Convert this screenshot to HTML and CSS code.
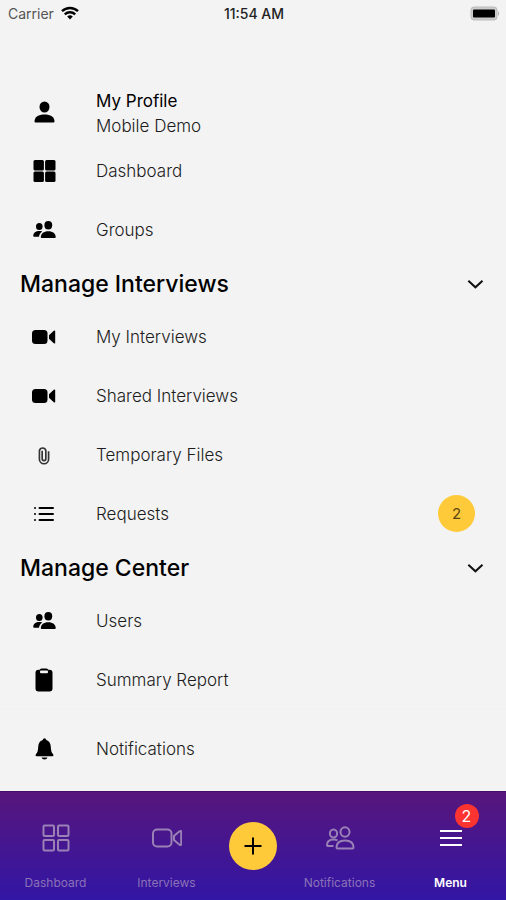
FILE: index.html
```html
<!DOCTYPE html>
<html lang="en">
<head>
<meta charset="utf-8">
<meta name="viewport" content="width=device-width, initial-scale=1">
<title>Menu</title>
<link rel="stylesheet" href="styles.css">
</head>
<body>
<svg class="sprite" aria-hidden="true">
  <symbol id="person" viewBox="0 0 24 24"><ellipse cx="12.500" cy="7" rx="5" ry="5.600"/><path d="M2.500 21.500c0-4.500 4-7 10-7s10 2.500 10 7q0 1-1 1h-18q-1 0-1-1z"/></symbol>
  <symbol id="grid" viewBox="0 0 24 24"><rect x="1.500" y="1" width="10.400" height="10.400" rx="1.500"/><rect x="13.100" y="1" width="10.400" height="10.400" rx="1.500"/><rect x="1.500" y="12.600" width="10.400" height="10.400" rx="1.500"/><rect x="13.100" y="12.600" width="10.400" height="10.400" rx="1.500"/></symbol>
  <symbol id="people" viewBox="0 0 24 24"><ellipse cx="16.300" cy="7.300" rx="3.900" ry="4.200"/><ellipse cx="7.300" cy="8.500" rx="3.300" ry="3.600"/><path d="M8.800 19.200c0-3.700 3-6 7.500-6s7.400 2.300 7.400 6q0 .8-.8.8H9.600q-.8 0-.8-.8z"/><path d="M10.300 13.600C8.400 14.900 7.200 16.700 7 18.800H2q-.7 0-.7-.8c0-3 2.500-4.900 6-4.900 1.200 0 2.100.1 3 .5z"/></symbol>
  <symbol id="video" viewBox="0 0 24 24"><rect x="0" y="5" width="15.500" height="14" rx="3.500"/><path d="M17 10.200l4.800-4.400q1.400-1 1.400.6v11.200q0 1.600-1.400.6L17 13.800z"/></symbol>
  <symbol id="clip" viewBox="0 0 24 24"><path d="M9.800 7v9.500a2.200 2.200 0 0 0 4.400 0V6.500a4 4 0 0 0-7.700 0V17a5.500 5.500 0 0 0 11 0V7.500"/></symbol>
  <symbol id="list" viewBox="0 0 24 24"><path d="M7.500 6H21M7.500 12H21M7.500 18H21"/><path class="dots" d="M3 6h.01M3 12h.01M3 18h.01"/></symbol>
  <symbol id="clipboard" viewBox="0 0 24 24"><path fill-rule="evenodd" d="M6.500 1.800h1.300Q8.500.6 9.800.6h4.400q1.300 0 2 1.200h1.300q3 0 3 3v15.600q0 3-3 3h-11q-3 0-3-3V4.800q0-3 3-3zM9 2.600q-1 0-1 1v.7q0 1 1 1h6q1 0 1-1v-.7q0-1-1-1z"/></symbol>
  <symbol id="bell" viewBox="0 0 24 24"><path d="M12.500 1.200q1.500 0 1.800 1.700c3 .8 4.300 3.600 4.500 7 .2 4 .8 5.400 2.200 7.200q1.200 2-.7 2.200H4.700q-1.900-.2-.7-2.200c1.400-1.800 2-3.200 2.200-7.200.2-3.400 1.500-6.200 4.500-7q.3-1.700 1.800-1.700zM9.500 20.500h6q-.6 2-3 2t-3-2z"/></symbol>
  <symbol id="chevron" viewBox="0 0 24 24"><path d="M4 8l8.500 8L21 8"/></symbol>
  <symbol id="grid-line" viewBox="0 0 30 30"><rect x="2.500" y="2.500" width="10.500" height="10.500" rx="1"/><rect x="17" y="2.500" width="10.500" height="10.500" rx="1"/><rect x="2.500" y="17" width="10.500" height="10.500" rx="1"/><rect x="17" y="17" width="10.500" height="10.500" rx="1"/></symbol>
  <symbol id="video-line" viewBox="0 0 30 30"><rect x="1" y="6.500" width="18.500" height="17" rx="4"/><path d="M22 13l5.500-4.700q1.700-1 1.700.7v12q0 1.700-1.700.7L22 17z"/></symbol>
  <symbol id="people-line" viewBox="0 0 30 30"><ellipse cx="20" cy="9" rx="4.500" ry="4.800"/><ellipse cx="8.500" cy="10.500" rx="3.600" ry="4"/><path d="M11.500 24.500c0-4.500 3-7 8.500-7s8.500 2.500 8.500 7q0 1-1 1h-15q-1 0-1-1zM12.500 17.400q-1.700-.8-4-.8c-4.300 0-6.500 2.300-6.500 5.600q0 .8.800.8H8.500"/></symbol>
</svg>

<div class="screen">
  <header class="status">
    <div class="carrier">Carrier
      <svg class="wifi" viewBox="0 0 18 14"><path d="M1 5.200a11.500 11.500 0 0 1 16 0M3.800 8.300a7.500 7.500 0 0 1 10.400 0"/><path class="solid" d="M6.200 10.600a4 4 0 0 1 5.600 0L9 13.600z"/></svg>
    </div>
    <time class="clock">11:54 AM</time>
    <svg class="battery" viewBox="0 0 30 15"><rect class="shell" x="1" y="1" width="26" height="13" rx="3"/><rect x="3" y="3.500" width="22" height="8" rx="1"/><path class="cap" d="M28 5q2 2.500 0 5z"/></svg>
  </header>

  <main class="menu">
    <a class="row profile" href="#profile"><svg class="icon"><use href="#person"/></svg><span class="lines"><span class="name">My Profile</span><span>Mobile Demo</span></span></a>
    <a class="row" href="#dashboard"><svg class="icon"><use href="#grid"/></svg><span>Dashboard</span></a>
    <a class="row" href="#groups"><svg class="icon"><use href="#people"/></svg><span>Groups</span></a>

    <h2 class="heading"><button class="toggle" type="button" aria-expanded="true">Manage Interviews<svg class="chevron"><use href="#chevron"/></svg></button></h2>
    <a class="row" href="#my-interviews"><svg class="icon"><use href="#video"/></svg><span>My Interviews</span></a>
    <a class="row" href="#shared"><svg class="icon"><use href="#video"/></svg><span>Shared Interviews</span></a>
    <a class="row" href="#files"><svg class="icon clip"><use href="#clip"/></svg><span>Temporary Files</span></a>
    <a class="row" href="#requests"><svg class="icon list"><use href="#list"/></svg><span>Requests</span><span class="count">2</span></a>

    <h2 class="heading"><button class="toggle" type="button" aria-expanded="true">Manage Center<svg class="chevron"><use href="#chevron"/></svg></button></h2>
    <a class="row" href="#users"><svg class="icon"><use href="#people"/></svg><span>Users</span></a>
    <a class="row" href="#report"><svg class="icon"><use href="#clipboard"/></svg><span>Summary Report</span></a>
    <a class="row separate" href="#notifications"><svg class="icon"><use href="#bell"/></svg><span>Notifications</span></a>
  </main>

  <nav class="tabs">
    <a class="tab" href="#dashboard"><svg class="tab-icon"><use href="#grid-line"/></svg>Dashboard</a>
    <a class="tab" href="#interviews"><svg class="tab-icon"><use href="#video-line"/></svg>Interviews</a>
    <button class="add" type="button" aria-label="Add"><svg viewBox="0 0 24 24"><path d="M12 3.500v17M3.500 12h17"/></svg></button>
    <a class="tab" href="#people"><svg class="tab-icon"><use href="#people-line"/></svg>Notifications</a>
    <a class="tab active" href="#menu"><svg class="tab-icon" viewBox="0 0 30 30"><path d="M4 8h22M4 15h22M4 22h22"/></svg>Menu<span class="alert">2</span></a>
  </nav>
</div>
</body>
</html>
```
FILE: styles.css
```css
* { box-sizing: border-box; }

body {
  margin: 0;
  background: #f3f3f3;
  color: #1c1c1c;
  font-family: Inter, "Liberation Sans", sans-serif;
  font-size: 17px;
  font-weight: 300;
}

a { color: inherit; text-decoration: none; }
button { border: 0; padding: 0; font: inherit; color: inherit; cursor: pointer; }
.sprite { position: absolute; width: 0; height: 0; }

.screen { display: flex; flex-direction: column; min-height: 100vh; }

.status {
  display: grid;
  grid-template-columns: 1fr auto 1fr;
  align-items: center;
  height: 26px;
  padding: 0 6px 0 8px;
  font-size: 14px;
  font-weight: 400;
}
.carrier { display: flex; align-items: center; gap: 7px; color: #555; }
.clock { font-weight: 500; color: #222; }
.wifi { width: 18px; height: 14px; fill: none; stroke: #000; stroke-width: 2.4; }
.wifi .solid { fill: #000; stroke: none; }
.battery { width: 30px; height: 15px; justify-self: end; }
.battery .shell { fill: #ccc; stroke: #bbb; }
.battery .cap { fill: #aaa; }

.menu { flex: 1; padding-top: 61px; }

.row {
  display: flex;
  align-items: center;
  gap: 40px;
  height: 59px;
  padding: 0 31px 0 32px;
}
.profile { height: 54px; }
.profile .icon { margin-bottom: 4px; }
.lines { display: flex; flex-direction: column; line-height: 25px; }
.name { font-weight: 400; color: #000; }
.icon { width: 24px; height: 24px; flex: none; fill: #000; }
.icon.clip { fill: none; stroke: #333; stroke-width: 2; padding: 2px; }
.icon.list { fill: none; stroke: #000; stroke-width: 2; stroke-linecap: round; }
.list .dots { stroke-width: 3; }
.separate { height: 69px; padding-top: 10px; border-top: 1px solid #f1f1f1; }

.count {
  display: grid;
  place-items: center;
  width: 37px;
  height: 37px;
  margin-left: auto;
  border-radius: 50%;
  background: #ffca3a;
  font-size: 15px;
  font-weight: 400;
  color: #5a4510;
}

.heading { margin: 0; font-size: 23px; font-weight: 500; color: #000; }
.toggle {
  display: flex;
  align-items: center;
  justify-content: space-between;
  width: 100%;
  height: 48px;
  padding: 1px 21px 0 20px;
  background: none;
  text-align: left;
}
.chevron { width: 20px; height: 20px; fill: none; stroke: #111; stroke-width: 2.4; }

.tabs {
  display: grid;
  grid-template-columns: 1fr 1fr 62px 1fr 1fr;
  height: 109px;
  background: linear-gradient(#57167c, #3216a5);
  border-top: 1px solid #45106c;
}
.tab {
  position: relative;
  display: flex;
  flex-direction: column;
  align-items: center;
  gap: 22px;
  padding-top: 31px;
  font-size: 12px;
  line-height: 16px;
  font-weight: 400;
  color: #8b72b7;
}
.tab-icon { width: 30px; height: 30px; fill: none; stroke: #9980b5; stroke-width: 2; }
.active { color: #fff; font-weight: 600; }
.active .tab-icon { stroke: #fff; }
.add {
  align-self: center;
  justify-self: center;
  display: grid;
  place-items: center;
  width: 48px;
  height: 48px;
  border-radius: 50%;
  background: #ffca3a;
}
.add svg { width: 24px; height: 24px; fill: none; stroke: #000; stroke-width: 2; }
.alert {
  position: absolute;
  top: 12px;
  left: calc(50% + 4px);
  width: 24px;
  height: 24px;
  border-radius: 50%;
  background: #fb3331;
  font-size: 16px;
  line-height: 24px;
  font-weight: 400;
  text-align: center;
}
```
